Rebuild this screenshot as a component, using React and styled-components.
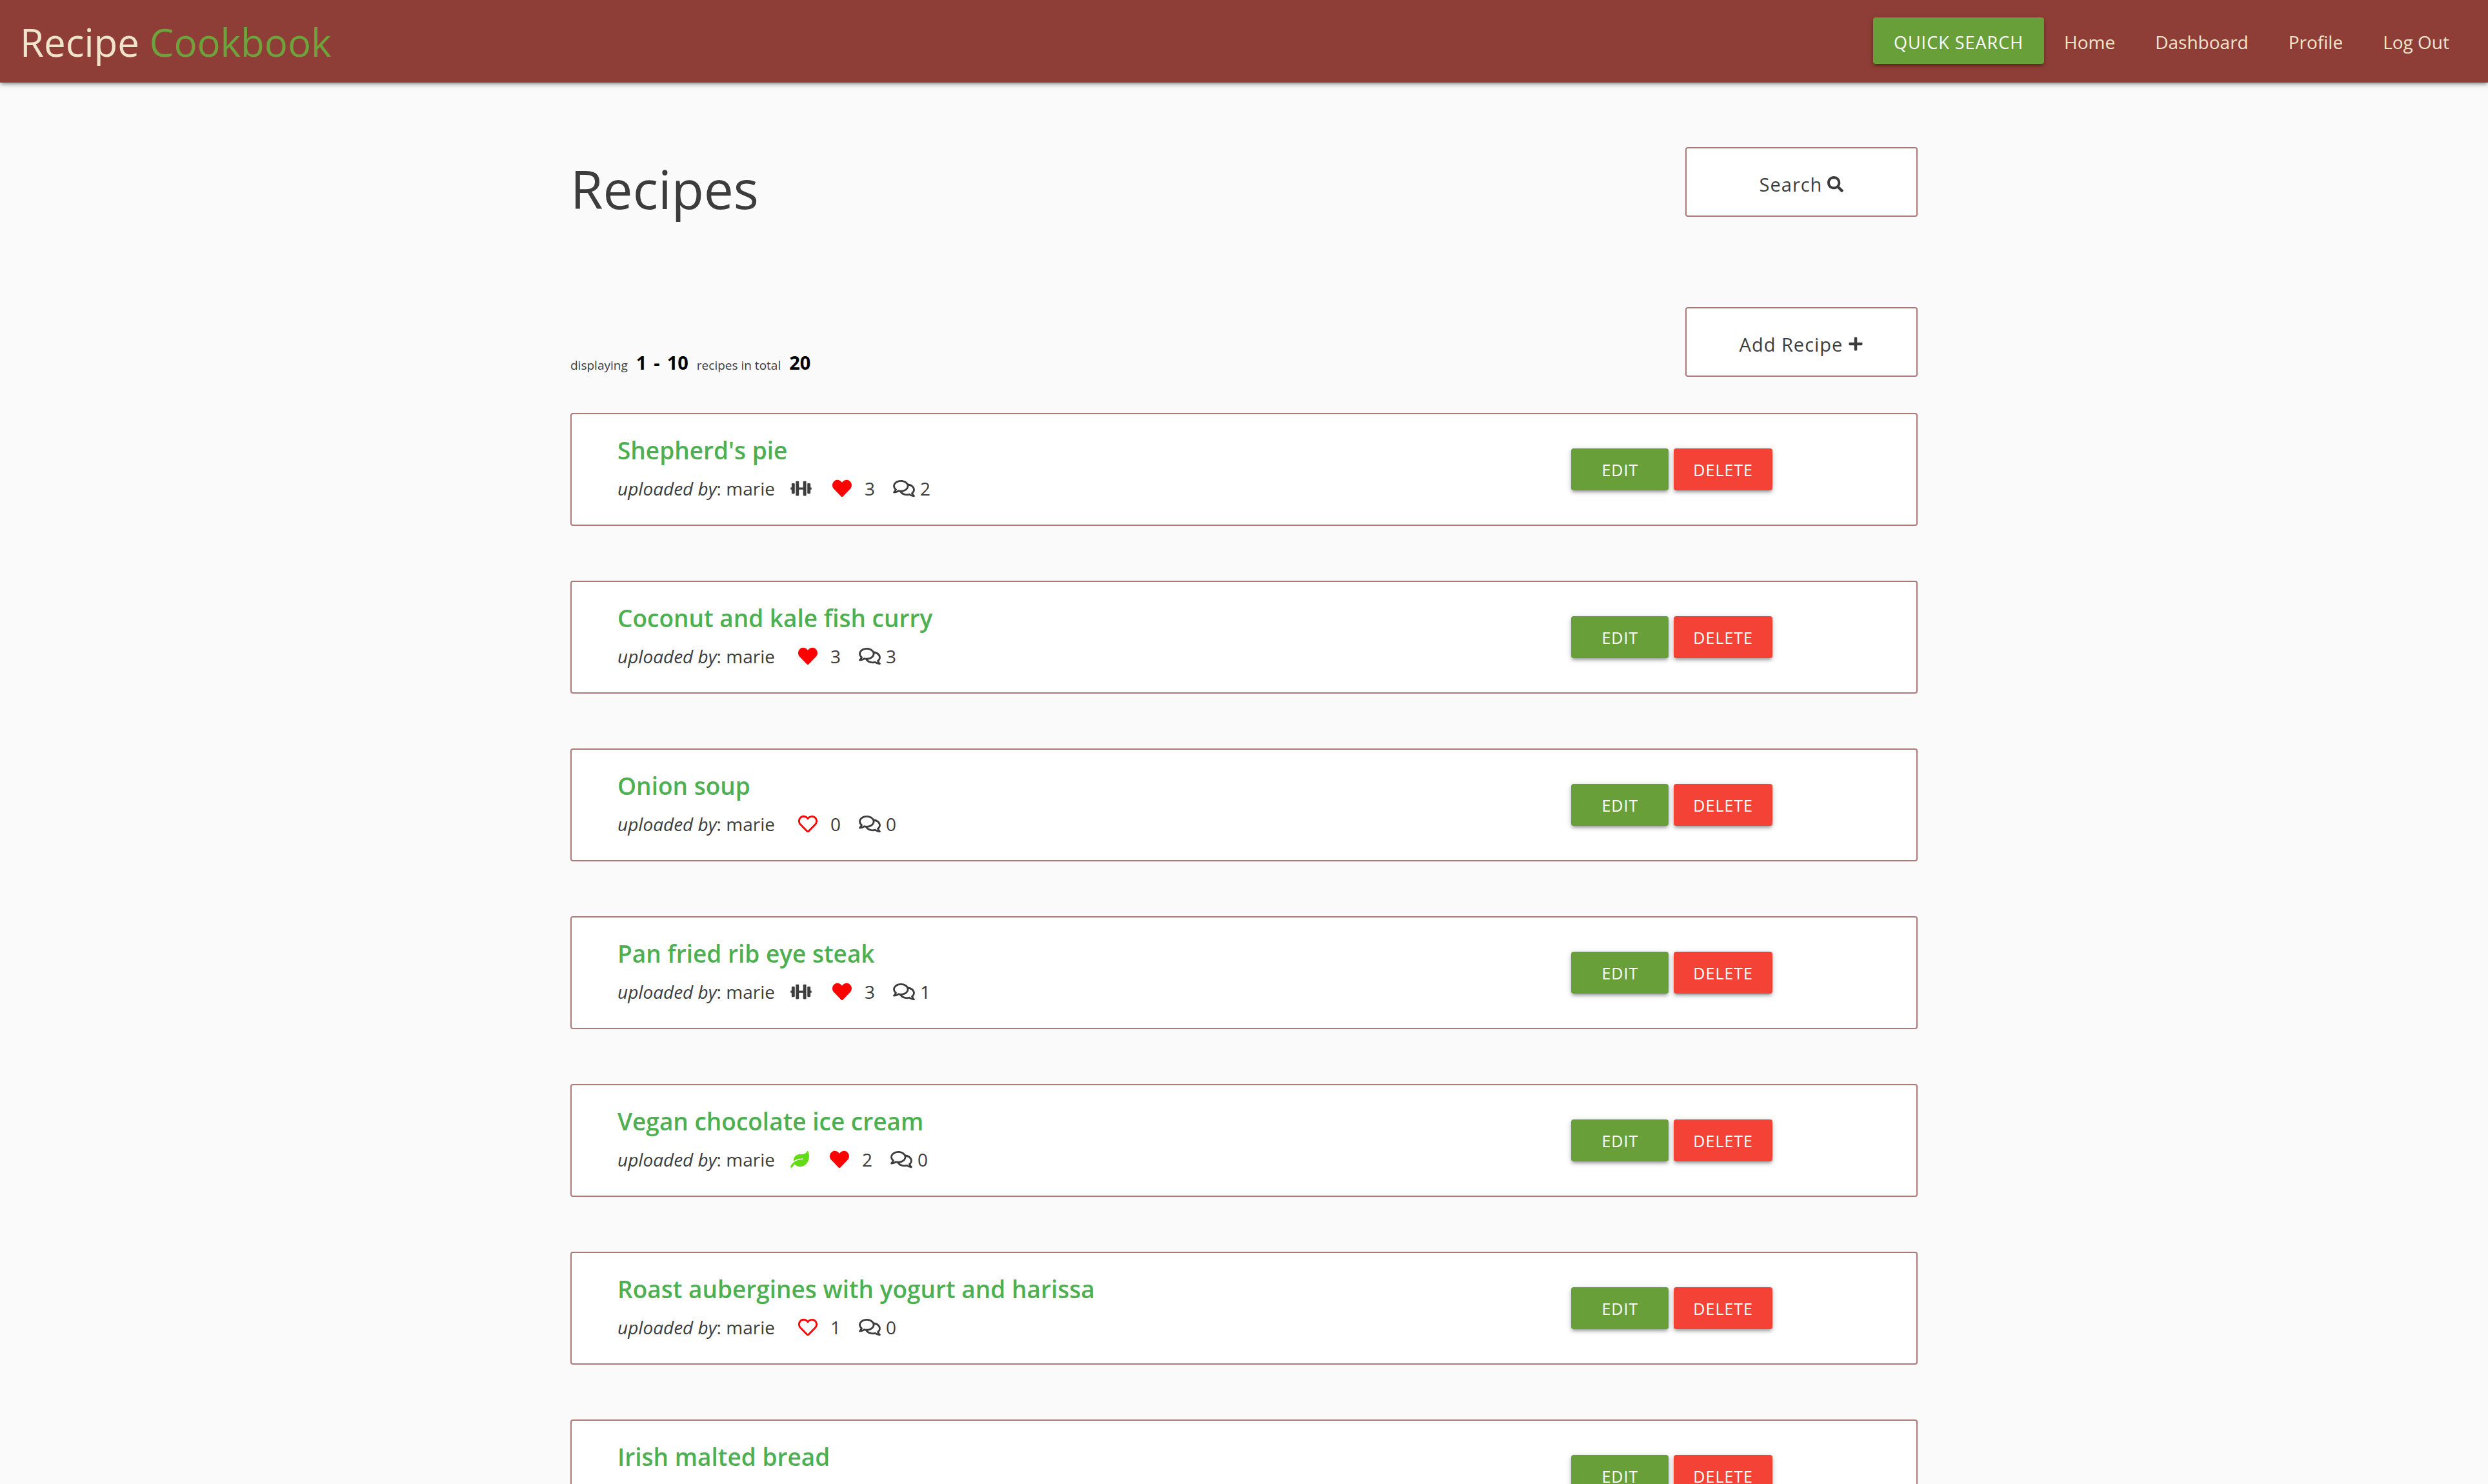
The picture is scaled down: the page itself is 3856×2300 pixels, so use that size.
import React from "react";
import styled, { createGlobalStyle } from "styled-components";
import { FaSearch, FaPlus, FaDumbbell, FaLeaf, FaHeart, FaRegHeart, FaRegComments } from "react-icons/fa";

const GlobalStyle = createGlobalStyle`
  * { box-sizing: border-box; }
  body { margin: 0; background: #fafafa; color: #3c3c3c; font-family: "Open Sans", "Noto Sans", sans-serif; }
  h1, h2, p, ul { margin: 0; padding: 0; font-weight: 400; }
  a { color: inherit; text-decoration: none; }
  button { font-family: inherit; cursor: pointer; }
`;

const Shell = styled.div`
  display: flex;
  flex-direction: column;
  height: 100vh;
  overflow: hidden;
`;

const Header = styled.header`
  display: flex;
  flex: none;
  align-items: center;
  justify-content: space-between;
  height: 128px;
  padding: 0 29px 2px 31px;
  background: #8f3e37;
  color: #f0e4cc;
  box-shadow: 0 4px 4px rgba(0, 0, 0, 0.14), 0 6px 2px -4px rgba(0, 0, 0, 0.12), 0 2px 10px rgba(0, 0, 0, 0.2);
`;

const Brand = styled.a`
  padding-top: 4px;
  font-size: 60px;
  line-height: 80px;
  span { color: #6ea23c; }
`;

const Nav = styled.nav`
  display: flex;
  align-items: center;
`;

const NavLink = styled.a`
  padding: 4px 31px 0;
  font-size: 28px;
  line-height: 64px;
`;

const Button = styled.button`
  display: flex;
  align-items: center;
  justify-content: center;
  min-width: ${(p) => (p.$large ? 265 : 151)}px;
  height: ${(p) => (p.$large ? 72 : 65)}px;
  padding: ${(p) => (p.$large ? "4px 31px 0" : "0 30px")};
  border: 0;
  border-radius: 4px;
  background: ${(p) => (p.$danger ? "#f44336" : "#689f38")};
  color: #fff;
  font-size: ${(p) => (p.$large ? 27 : 25)}px;
  letter-spacing: 1px;
  text-transform: uppercase;
  box-shadow: 0 4px 4px rgba(0, 0, 0, 0.14), 0 6px 2px -4px rgba(0, 0, 0, 0.12), 0 2px 10px rgba(0, 0, 0, 0.2);
`;

const Main = styled.main`
  width: 100%;
  max-width: 2088px;
  margin: 100px auto 0;
`;

const TopRow = styled.div`
  display: flex;
  align-items: flex-start;
  justify-content: space-between;
  height: ${(p) => p.$height}px;
`;

const Title = styled.h1`
  font-size: 82px;
  line-height: 128px;
`;

const Summary = styled.p`
  display: flex;
  align-items: baseline;
  gap: 13px;
  padding-top: 66px;
  font-size: 19px;
  line-height: 40px;
`;

const Count = styled.strong`
  display: flex;
  gap: 11px;
  color: #000;
  font-size: 29px;
`;

const OutlineButton = styled.button`
  display: flex;
  align-items: center;
  justify-content: center;
  gap: 8px;
  width: 360px;
  height: 108px;
  padding: 6px 0 0;
  border: 2px solid #ae7878;
  border-radius: 4px;
  background: #fff;
  color: #3c3c3c;
  font-size: 29px;
  letter-spacing: 1px;
`;

const List = styled.ul`
  display: flex;
  flex-direction: column;
  gap: 85px;
  list-style: none;
`;

const Card = styled.li`
  display: flex;
  justify-content: space-between;
  height: 175px;
  padding: 30px 223px 0 71px;
  border: 2px solid #ae7878;
  border-radius: 4px;
  background: #fff;
`;

const RecipeName = styled.h2`
  color: #4caf50;
  font-size: 37px;
  font-weight: 600;
  line-height: 52px;
`;

const Meta = styled.div`
  display: flex;
  align-items: center;
  margin-top: 3px;
  font-size: 28px;
  line-height: 60px;
`;

const Author = styled.span`
  padding-right: 4px;
`;

const Tag = styled.span`
  display: flex;
  margin-left: 20px;
  color: ${(p) => p.$color};
  svg { width: ${(p) => p.$width}px; height: 26px; }
`;

const Likes = styled.span`
  display: flex;
  align-items: center;
  gap: 20px;
  margin-left: 32px;
  svg { color: #f00; font-size: 30px; }
`;

const Comments = styled.span`
  display: flex;
  align-items: center;
  gap: 8px;
  margin-left: 28px;
  svg { width: 34px; height: 30px; }
`;

const Actions = styled.div`
  display: flex;
  gap: 8px;
  padding-top: 23px;
`;

const recipes = [
  { name: "Shepherd's pie", author: "marie", tag: "protein", likes: 3, liked: true, comments: 2 },
  { name: "Coconut and kale fish curry", author: "marie", likes: 3, liked: true, comments: 3 },
  { name: "Onion soup", author: "marie", likes: 0, liked: false, comments: 0 },
  { name: "Pan fried rib eye steak", author: "marie", tag: "protein", likes: 3, liked: true, comments: 1 },
  { name: "Vegan chocolate ice cream", author: "marie", tag: "vegan", likes: 2, liked: true, comments: 0 },
  { name: "Roast aubergines with yogurt and harissa", author: "marie", likes: 1, liked: false, comments: 0 },
  { name: "Irish malted bread" },
];

function RecipeCard({ recipe }) {
  return (
    <Card>
      <div>
        <RecipeName><a href="#recipe">{recipe.name}</a></RecipeName>
        {recipe.author && (
          <Meta>
            <Author><em>uploaded by</em>: {recipe.author}</Author>
            {recipe.tag === "protein" && <Tag $color="#3c3c3c" $width={33}><FaDumbbell /></Tag>}
            {recipe.tag === "vegan" && <Tag $color="#62dc12" $width={29}><FaLeaf /></Tag>}
            <Likes>{recipe.liked ? <FaHeart /> : <FaRegHeart />}{recipe.likes}</Likes>
            <Comments><FaRegComments />{recipe.comments}</Comments>
          </Meta>
        )}
      </div>
      <Actions>
        <Button type="button">Edit</Button>
        <Button type="button" $danger>Delete</Button>
      </Actions>
    </Card>
  );
}

export default function App() {
  return (
    <Shell>
      <GlobalStyle />
      <Header>
        <Brand href="#home">Recipe <span>Cookbook</span></Brand>
        <Nav>
          <Button type="button" $large>Quick Search</Button>
          <NavLink href="#home">Home</NavLink>
          <NavLink href="#dashboard">Dashboard</NavLink>
          <NavLink href="#profile">Profile</NavLink>
          <NavLink href="#logout">Log Out</NavLink>
        </Nav>
      </Header>
      <Main>
        <TopRow $height={248}>
          <Title>Recipes</Title>
          <OutlineButton type="button">Search <FaSearch size={25} /></OutlineButton>
        </TopRow>
        <TopRow $height={164}>
          <Summary>
            displaying
            <Count><span>1</span><span>-</span><span>10</span></Count>
            recipes in total
            <Count>20</Count>
          </Summary>
          <OutlineButton type="button">Add Recipe <FaPlus size={24} /></OutlineButton>
        </TopRow>
        <List>
          {recipes.map((r) => <RecipeCard key={r.name} recipe={r} />)}
        </List>
      </Main>
    </Shell>
  );
}
